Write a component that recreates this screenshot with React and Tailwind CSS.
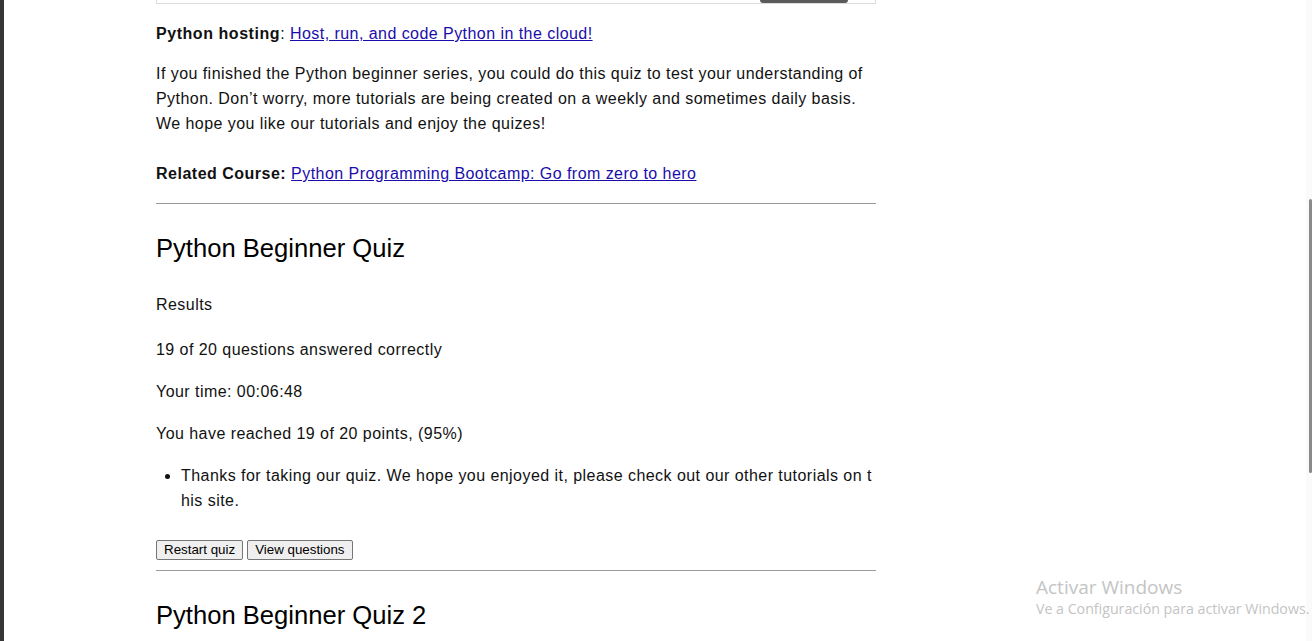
export default function App() {
  return (
    <div className="relative h-[641px] overflow-hidden bg-white flex font-['Liberation_Sans',Arial,sans-serif] text-[16px] text-[#111]">
      <div className="w-[4px] shrink-0 bg-[#363636]" />

      <div className="flex-1 pl-[152px]">
        <div className="w-[720px] tracking-[0.45px]">
          <div className="h-[4px] border-x border-b border-[#dddddd] flex justify-end pr-[27px]">
            <div className="w-[88px] h-[3px] rounded-b-full bg-[#5a5a5a]" />
          </div>

          <p className="mt-[17px] leading-[25px]">
            <b className="tracking-[0.55px]">Python hosting</b>:{' '}
            <a href="#" className="underline text-[#1a0dab]">Host, run, and code Python in the cloud!</a>
          </p>

          <p className="mt-[15px] leading-[25px]">
            If you finished the Python beginner series, you could do this quiz to test your understanding of Python. Don’t worry, more tutorials are being created on a weekly and sometimes daily basis. We hope you like our tutorials and enjoy the quizes!
            <br />
            <br />
            <b className="tracking-[0.5px]">Related Course:</b>{' '}
            <a href="#" className="underline text-[#1a0dab]">Python Programming Bootcamp: Go from zero to hero</a>
          </p>

          <hr className="mt-[17px] border-0 border-t border-[#9a9a9a]" />

          <h2 className="mt-[29px] text-[25.6px] leading-[30px] font-normal tracking-normal text-black">Python Beginner Quiz</h2>

          <p className="mt-[29px] leading-[25px]">Results</p>
          <p className="mt-[20px] leading-[25px]">19 of 20 questions answered correctly</p>
          <p className="mt-[17px] leading-[25px]">Your time: 00:06:48</p>
          <p className="mt-[17px] leading-[25px]">You have reached 19 of 20 points, (95%)</p>

          <ul className="mt-[17px] pl-[25px] list-disc leading-[25px]">
            <li>
              Thanks for taking our quiz. We hope you enjoyed it, please check out our other tutorials on t
              <br />
              his site.
            </li>
          </ul>

          <div className="mt-[27px] flex gap-[4px] text-[13.33px] tracking-normal text-black">
            <button className="h-[20px] px-[7px] leading-none border border-[#767676] rounded-[2px] bg-[#efefef]">Restart quiz</button>
            <button className="h-[20px] px-[7px] leading-none border border-[#767676] rounded-[2px] bg-[#efefef]">View questions</button>
          </div>

          <hr className="mt-[10px] border-0 border-t border-[#9a9a9a]" />

          <h2 className="mt-[29px] text-[25.6px] leading-[30px] font-normal tracking-normal text-black">Python Beginner Quiz 2</h2>
        </div>
      </div>

      <div className="w-[6px] shrink-0 bg-[#fafafa] flex justify-end pt-[199px]">
        <div className="w-[3px] h-[274px] rounded-full bg-[#8a8a8a]" />
      </div>

      <div className="absolute left-[1036px] top-[574px] font-['Open_Sans','Noto_Sans',sans-serif] text-[#c4c4c4] whitespace-nowrap">
        <div className="text-[19px] leading-[26px]">Activar Windows</div>
        <div className="text-[14.2px] leading-[18px]">Ve a Configuración para activar Windows.</div>
      </div>
    </div>
  );
}
